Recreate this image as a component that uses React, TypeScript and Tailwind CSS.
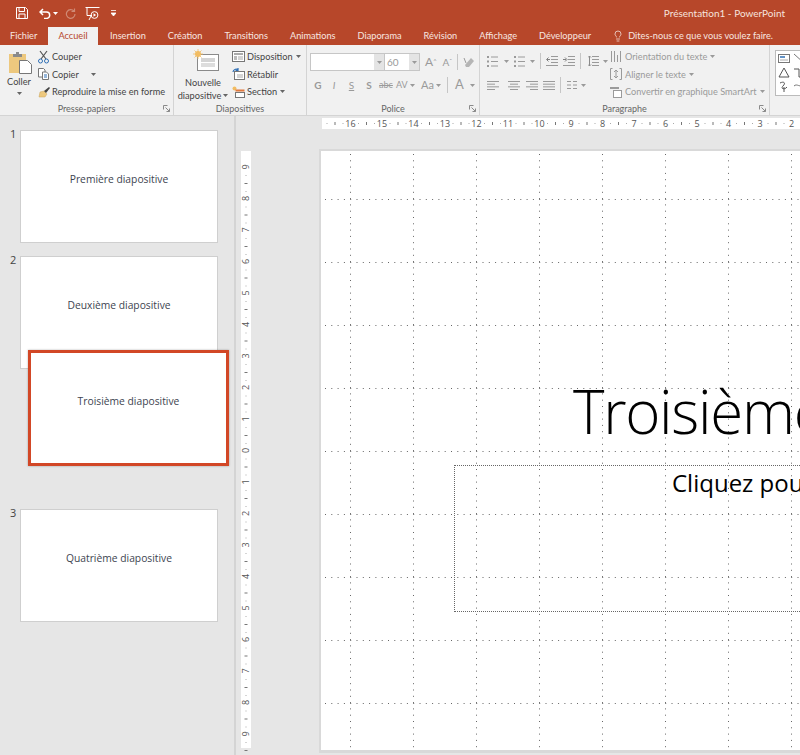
import type { ReactNode } from 'react'
import { Lightbulb } from 'lucide-react'

const tabs = ['Insertion', 'Création', 'Transitions', 'Animations', 'Diaporama', 'Révision', 'Affichage', 'Développeur']

const hNumbers = [16, 15, 14, 13, 12, 11, 10, 9, 8, 7, 6, 5, 4, 3, 2]
const vNumbers = [9, 8, 7, 6, 5, 4, 3, 2, 1, 0, 1, 2, 3, 4, 5, 6, 7, 8, 9]

function Caret({ className = '' }: { className?: string }) {
  return (
    <svg width="5" height="3" viewBox="0 0 5 3" className={`shrink-0 ${className}`}>
      <path d="M0 0h5L2.5 3z" fill="currentColor" />
    </svg>
  )
}

// paragraph alignment glyph, one [x, width] per line
function AlignIcon({ rows }: { rows: number[][] }) {
  return (
    <svg width="12" height="9" viewBox="0 0 12 9" className="block shrink-0">
      {rows.map(([x, w], i) => (
        <rect key={i} x={x} y={i * 2.67} width={w} height="1" fill="#9a9a9a" />
      ))}
    </svg>
  )
}

function ColumnsIcon() {
  return (
    <svg width="10" height="8" viewBox="0 0 10 8" className="block shrink-0">
      <path d="M0 .5h4M6 .5h4M0 4h4M6 4h4M0 7.500h4M6 7.500h4" stroke="#9a9a9a" />
    </svg>
  )
}

function ListIcon() {
  return (
    <svg width="11" height="11" viewBox="0 0 11 11" className="block shrink-0">
      <rect x="0" y="0" width="2" height="2" fill="#9a9a9a" />
      <rect x="0" y="4.500" width="2" height="2" fill="#9a9a9a" />
      <rect x="0" y="9" width="2" height="2" fill="#9a9a9a" />
      <path d="M4 1h7M4 5.500h7M4 10h7" stroke="#9a9a9a" />
    </svg>
  )
}

function IndentIcon({ flip = false }: { flip?: boolean }) {
  return (
    <svg width="12" height="10" viewBox="0 0 12 10" className="block shrink-0">
      <path d="M5 .5h7M5 3.500h7M5 6.500h7M0 9.500h12" stroke="#9a9a9a" />
      <path d={flip ? 'M0 3.500h3M2 1.500l2 2-2 2' : 'M4 3.500H1M2.500 1.500l-2 2 2 2'} stroke="#7f7f7f" fill="none" />
    </svg>
  )
}

function SpacingIcon() {
  return (
    <svg width="11" height="12" viewBox="0 0 11 12" className="block shrink-0">
      <path d="M4 1.500h7M4 4.500h7M4 7.500h7M4 10.500h7" stroke="#9a9a9a" />
      <path d="M1.500 1v10M0 2.500 1.500 1 3 2.500M0 9.500 1.500 11 3 9.500" stroke="#8a8a8a" fill="none" />
    </svg>
  )
}

function SmallIcon({ children, w = 14, h = 14 }: { children: ReactNode; w?: number; h?: number }) {
  return (
    <svg width={w} height={h} viewBox={`0 0 ${w} ${h}`} className="shrink-0">
      {children}
    </svg>
  )
}

function RibbonGroup({ width, label, launcher, children }: { width: string; label: string; launcher?: boolean; children: ReactNode }) {
  return (
    <div className={`relative flex h-full shrink-0 flex-col border-r border-[#d4d4d4] ${width}`}>
      <div className="min-h-0 flex-1">{children}</div>
      <div className="h-[13px] text-center text-[9px] leading-[13px] text-[#666]">{label}</div>
      {launcher && (
        <svg width="7" height="7" viewBox="0 0 7 7" className="absolute bottom-[3px] right-[3px]">
          <path d="M0.5 0.5h4M0.5 0.5v4M2.5 2.5l4 4M6.5 3.500v3h-3" stroke="#8a8a8a" strokeWidth="1" fill="none" />
        </svg>
      )}
    </div>
  )
}

function Thumb({ label }: { label: string }) {
  return (
    <div className="flex h-[113px] w-[198px] items-center justify-center border border-[#cfcfcf] bg-white pb-[14px] font-['Open_Sans',sans-serif] text-[10.3px] text-[#3d4450]">
      {label}
    </div>
  )
}

function HRuler() {
  return (
    <svg width="478" height="11" viewBox="0 0 478 11" className="block bg-white">
      {hNumbers.map((n, i) => {
        const x = 28.5 + i * 31.5
        return (
          <g key={i}>
            <text x={x} y="9" textAnchor="middle" fontSize="9" fill="#555" fontFamily="Open Sans, sans-serif">{n}</text>
            <rect x={x - 16} y="4" width="1" height="3" fill="#777" />
            <rect x={x - 24} y="5" width="1" height="1" fill="#aaa" />
            <rect x={x - 8} y="5" width="1" height="1" fill="#aaa" />
          </g>
        )
      })}
    </svg>
  )
}

function VRuler() {
  return (
    <svg width="10" height="597" viewBox="0 0 10 597" className="mt-[2px] block shrink-0 overflow-visible bg-white">
      {vNumbers.map((n, i) => {
        const y = 16 + i * 31.5
        return (
          <g key={i}>
            <text x="0" y="0" textAnchor="middle" fontSize="9" fill="#555" fontFamily="Open Sans, sans-serif" transform={`translate(8 ${y}) rotate(-90)`}>{n}</text>
            <rect x="3.5" y={y + 16} width="3" height="1" fill="#777" />
            <rect x="4.5" y={y + 8} width="1" height="1" fill="#aaa" />
            <rect x="4.5" y={y + 24} width="1" height="1" fill="#aaa" />
          </g>
        )
      })}
    </svg>
  )
}

function SlideGrid() {
  const vs = Array.from({ length: 8 }).map((_, i) => 29.5 + i * 63)
  const hs = Array.from({ length: 9 }).map((_, i) => 48.5 + i * 63)
  return (
    <svg width="480" height="600" className="absolute left-0 top-0">
      {vs.map((x) => (
        <line key={x} x1={x} x2={x} y1="3" y2="600" stroke="#666" strokeWidth="1" strokeDasharray="1 5.3" />
      ))}
      {hs.map((y) => (
        <line key={y} x1="4" x2="480" y1={y} y2={y} stroke="#666" strokeWidth="1" strokeDasharray="1 5.3" />
      ))}
    </svg>
  )
}

export default function App() {
  return (
    <div className="flex h-[755px] w-[800px] flex-col overflow-hidden bg-[#e6e6e6] font-['Lato',sans-serif]">
      {/* Title bar */}
      <div className="flex h-[26px] shrink-0 items-center justify-between bg-[#b7472a] pl-[16px] pr-[15px] text-white">
        <div className="flex items-center">
          <svg width="12" height="12" viewBox="0 0 12 12">
            <path d="M.5.5h9l2 2v9H.5z" fill="none" stroke="#fff" />
            <path d="M3 1v3.500h5.500V1M3 11V7h6v4" fill="none" stroke="#fff" />
          </svg>
          <svg width="12" height="11" viewBox="0 0 12 11" className="ml-[11px]">
            <path d="M4 1 1 4l3 3M1 4h6.500a3.200 3.200 0 0 1 0 6.400H5" fill="none" stroke="#fff" strokeWidth="1.500" />
          </svg>
          <Caret className="ml-[2px] text-white" />
          <svg width="11" height="11" viewBox="0 0 11 11" className="ml-[7px]">
            <path d="M9 3.200A4.300 4.300 0 1 0 10 6M9.500 .5v3h-3" fill="none" stroke="#d08a75" strokeWidth="1.200" />
          </svg>
          <svg width="15" height="15" viewBox="0 0 15 15" className="ml-[9px]">
            <path d="M.5 1.500h14M2 1.500v8h5M6 10l-2 4" fill="none" stroke="#fff" />
            <circle cx="9.500" cy="9" r="3.400" fill="none" stroke="#fff" />
            <path d="M8.500 7.200v3.600l2.600-1.800z" fill="#fff" />
          </svg>
          <svg width="5" height="6" viewBox="0 0 5 6" className="ml-[11px]">
            <path d="M0 .5h5M0 3h5L2.500 6z" stroke="#fff" strokeWidth=".8" fill="#fff" />
          </svg>
        </div>
        <span className="whitespace-nowrap text-[10px] text-[#f6e3dd]">Présentation1 - PowerPoint</span>
      </div>

      {/* Tabs */}
      <div className="flex h-[19px] shrink-0 items-end whitespace-nowrap bg-[#b7472a] text-[9.2px] leading-[18px] text-[#f8e6e0]">
        <span className="ml-[10px] h-[18px] w-[26px]">Fichier</span>
        <span className="ml-[12px] h-[18px] w-[50px] bg-[#f1f1f1] text-center text-[#b7472a]">Accueil</span>
        <div className="ml-[12px] flex h-[18px] gap-[22px]">
          {tabs.map((t) => (
            <span key={t}>{t}</span>
          ))}
        </div>
        <span className="ml-[21px] flex h-[18px] items-center gap-[4px]">
          <Lightbulb size={12} strokeWidth={1.3} className="text-white" />
          Dites-nous ce que vous voulez faire.
        </span>
      </div>

      {/* Ribbon */}
      <div className="flex h-[71px] shrink-0 whitespace-nowrap border-b border-[#d4d4d4] bg-[#f1f1f1] text-[9.2px] text-[#444]">
        <RibbonGroup width="w-[174px]" label="Presse-papiers" launcher>
          <div className="flex h-full">
            <div className="flex w-[38px] flex-col items-center pt-[7px]">
              <svg width="23" height="22" viewBox="0 0 23 22" className="ml-[3px] shrink-0">
                <path d="M0 2h17v19H0z" fill="#edc87e" />
                <path d="M4 2h3V0h3v2h3v3H4z" fill="#8a8a8a" />
                <path d="M10.500 8.500h8l4 4v9h-12z" fill="#fff" stroke="#777" />
              </svg>
              <span className="mt-[1px] leading-[13px]">Coller</span>
              <Caret className="mt-[4px] text-[#666]" />
            </div>
            <div className="flex flex-col pt-[3px] leading-[17.5px]">
              <div className="flex items-center gap-[3px]">
                <SmallIcon w={11} h={14}>
                  <path d="M2 1l6 8M9 1L3 9" stroke="#555" strokeWidth="1.200" />
                  <circle cx="2.500" cy="11" r="2" fill="none" stroke="#2f6fb5" />
                  <circle cx="8.500" cy="11" r="2" fill="none" stroke="#2f6fb5" />
                </SmallIcon>
                Couper
              </div>
              <div className="flex items-center gap-[3px]">
                <SmallIcon w={11} h={12}>
                  <path d="M.5.5h5l1.500 1.500v7h-6.500z" fill="#fff" stroke="#777" />
                  <path d="M4.500 4h4l2 2v5.500h-6z" fill="#fff" stroke="#777" />
                  <path d="M6 7h3M6 9h3" stroke="#2f6fb5" />
                </SmallIcon>
                Copier
                <Caret className="ml-[9px] text-[#666]" />
              </div>
              <div className="flex items-center gap-[1px]">
                <SmallIcon w={13} h={12}>
                  <path d="M1 11 2 6l4-1 3 3-2 3z" fill="#edc87e" stroke="#c9a45c" strokeWidth=".5" />
                  <path d="M6 5l5-4 1 1-4 5z" fill="#444" />
                </SmallIcon>
                Reproduire la mise en forme
              </div>
            </div>
          </div>
        </RibbonGroup>

        <RibbonGroup width="w-[133px]" label="Diapositives">
          <div className="flex h-full">
            <div className="flex w-[58px] flex-col items-center pt-[4px] leading-[12.5px]">
              <svg width="26" height="23" viewBox="0 0 26 23" className="ml-[6px] shrink-0">
                <rect x="4.500" y="5.500" width="21" height="16" fill="#fff" stroke="#8a8a8a" />
                <rect x="8" y="9" width="14" height="4" fill="#d4d4d4" />
                <path d="M8 15h14M8 17h14" stroke="#bbb" />
                <circle cx="5" cy="5" r="3" fill="#f2bd63" />
                <path d="M5 0v10M0 5h10M1.500 1.500l7 7M8.500 1.500l-7 7" stroke="#f2bd63" strokeWidth=".8" />
              </svg>
              <span className="mt-[5px]">Nouvelle</span>
              <span className="flex items-center gap-[2px]">diapositive <Caret className="text-[#666]" /></span>
            </div>
            <div className="flex flex-col pt-[3px] leading-[17.5px]">
              <div className="flex items-center gap-[2px]">
                <SmallIcon w={13} h={12}>
                  <rect x=".5" y=".5" width="12" height="10" fill="#fff" stroke="#777" />
                  <rect x="2" y="2" width="9" height="2" fill="#aaa" />
                  <rect x="2" y="5" width="3" height="4" fill="#bbb" />
                  <path d="M6 6h5M6 8h5" stroke="#aaa" />
                </SmallIcon>
                <span className="flex items-center gap-[3px]">Disposition <Caret className="text-[#666]" /></span>
              </div>
              <div className="flex items-center gap-[2px]">
                <SmallIcon w={13} h={12}>
                  <rect x="2.500" y="3.500" width="10" height="8" fill="#fff" stroke="#777" />
                  <path d="M1 4a3 3 0 0 1 5-2M6 0v2.500H3.500" fill="none" stroke="#2f6fb5" strokeWidth="1.200" />
                  <path d="M5 7h6M5 9h6" stroke="#aaa" />
                </SmallIcon>
                Rétablir
              </div>
              <div className="flex items-center gap-[2px]">
                <SmallIcon w={13} h={12}>
                  <circle cx="2.500" cy="2.500" r="2" fill="#f2bd63" />
                  <rect x="3.500" y="3.500" width="9" height="2" fill="#e0793f" />
                  <rect x="3.500" y="6.500" width="9" height="5" fill="#fff" stroke="#777" />
                </SmallIcon>
                <span className="flex items-center gap-[3px]">Section <Caret className="text-[#666]" /></span>
              </div>
            </div>
          </div>
        </RibbonGroup>

        <RibbonGroup width="w-[173px]" label="Police" launcher>
          <div className="flex flex-col pl-[3px] pt-[8px] text-[#9a9a9a]">
            <div className="flex h-[18px] items-center">
              <div className="flex h-[18px] w-[75px] justify-end border border-[#c6c6c6] bg-white">
                <div className="flex w-[10px] items-center justify-center bg-[#e4e4e4]"><Caret /></div>
              </div>
              <div className="flex h-[18px] w-[35px] items-center justify-between border border-l-0 border-[#c6c6c6] bg-white pl-[2px] text-[10px]">
                60
                <div className="flex h-full w-[10px] items-center justify-center bg-[#e4e4e4]"><Caret /></div>
              </div>
              <span className="ml-[5px] text-[12px]">A<sup className="text-[6px]">^</sup></span>
              <span className="ml-[6px] text-[10px]">A<sup className="text-[6px]">ˇ</sup></span>
              <span className="ml-[5px] h-[16px] w-px bg-[#c6c6c6]" />
              <svg width="12" height="12" viewBox="0 0 12 12" className="ml-[5px]">
                <path d="M2 9l6-7 3 3-5 6H3z" fill="#b5b5b5" />
                <path d="M1 2l2 5" stroke="#9a9a9a" />
              </svg>
            </div>
            <div className="mt-[5px] flex h-[18px] items-center text-[10px]">
              <span className="w-[16px] text-center font-bold">G</span>
              <span className="w-[16px] text-center italic">I</span>
              <span className="w-[19px] text-center underline">S</span>
              <span className="w-[16px] text-center font-bold">S</span>
              <span className="w-[18px] text-center text-[9px] line-through">abc</span>
              <span className="flex w-[26px] items-center gap-[2px] pl-[1px] text-[9px]">AV <Caret /></span>
              <span className="flex w-[26px] items-center gap-[2px] text-[11px]">Aa <Caret /></span>
              <span className="h-[16px] w-px bg-[#c6c6c6]" />
              <span className="ml-[7px] flex items-center gap-[6px] text-[13px]">A <Caret /></span>
            </div>
          </div>
        </RibbonGroup>

        <RibbonGroup width="w-[290px]" label="Paragraphe" launcher>
          <div className="flex h-full text-[#9a9a9a]">
            <div className="flex w-[130px] flex-col pl-[7px] pt-[9px]">
              <div className="flex h-[14px] items-center">
                <ListIcon />
                <Caret className="ml-[6px]" />
                <span className="ml-[5px]"><ListIcon /></span>
                <Caret className="ml-[5px]" />
                <span className="ml-[5px] h-[16px] w-px bg-[#c6c6c6]" />
                <span className="ml-[5px]"><IndentIcon /></span>
                <span className="ml-[5px]"><IndentIcon flip /></span>
                <span className="ml-[5px] h-[16px] w-px bg-[#c6c6c6]" />
                <span className="ml-[7px]"><SpacingIcon /></span>
                <Caret className="ml-[4px]" />
              </div>
              <div className="mt-[9px] flex h-[16px] items-center">
                <AlignIcon rows={[[0, 12], [0, 8], [0, 12], [0, 8]]} />
                <span className="ml-[9px]"><AlignIcon rows={[[0, 12], [2, 8], [0, 12], [2, 8]]} /></span>
                <span className="ml-[6px]"><AlignIcon rows={[[0, 12], [4, 8], [0, 12], [4, 8]]} /></span>
                <span className="ml-[5px]"><AlignIcon rows={[[0, 12], [0, 12], [0, 12], [0, 12]]} /></span>
                <span className="ml-[5px] h-[16px] w-px bg-[#c6c6c6]" />
                <span className="ml-[6px]"><ColumnsIcon /></span>
                <Caret className="ml-[4px]" />
              </div>
            </div>
            <div className="flex flex-col pt-[3px] leading-[17.5px]">
              <div className="flex items-center gap-[3px]">
                <SmallIcon w={12} h={13}>
                  <path d="M1.500 1v11M4.500 1v11M7.500 5v7M10.500 1v11" stroke="#9a9a9a" />
                </SmallIcon>
                <span className="flex items-center gap-[3px]">Orientation du texte <Caret /></span>
              </div>
              <div className="flex items-center gap-[3px]">
                <SmallIcon w={12} h={12}>
                  <path d="M2.500.5H.5v11h2M9.500.5h2v11h-2" fill="none" stroke="#9a9a9a" />
                  <path d="M6 2v8M4 4l2-2 2 2M4 8l2 2 2-2" fill="none" stroke="#9a9a9a" />
                </SmallIcon>
                <span className="flex items-center gap-[3px]">Aligner le texte <Caret /></span>
              </div>
              <div className="flex items-center gap-[3px]">
                <SmallIcon w={12} h={12}>
                  <path d="M0 1h9v2H0z" fill="#9a9a9a" />
                  <rect x="3.500" y="4.500" width="8" height="7" fill="#fff" stroke="#9a9a9a" />
                </SmallIcon>
                <span className="flex items-center gap-[3px]">Convertir en graphique SmartArt <Caret /></span>
              </div>
            </div>
          </div>
        </RibbonGroup>

        <div className="pl-[5px] pt-[5px]">
          <div className="h-[46px] w-[40px] border border-[#bbb] bg-white">
            <svg width="38" height="44" viewBox="0 0 38 44">
              <rect x="2.500" y="3.500" width="11" height="8" fill="#fff" stroke="#777" />
              <path d="M4 6h5" stroke="#2f6fb5" strokeWidth="1.500" />
              <path d="M4 9h8" stroke="#aaa" />
              <path d="M18 3l10 9" stroke="#777" />
              <path d="M8 17l-5 9h10z" fill="none" stroke="#555" />
              <path d="M18 18h5v8h6" fill="none" stroke="#555" />
              <path d="M4 32c4-2 6 0 3 3s2 4 4 1M8 36v5" fill="none" stroke="#555" />
              <path d="M18 35c3-3 6 2 10-1" fill="none" stroke="#777" />
            </svg>
          </div>
        </div>
      </div>

      {/* Work area */}
      <div className="relative flex min-h-0 flex-1">
        <div className="flex h-full w-[236px] shrink-0 flex-col gap-[13px] border-r-2 border-[#d4d4d4] pt-[14px]">
          <div className="flex">
            <span className="w-[20px] pl-[10px] font-['Open_Sans',sans-serif] text-[11px] leading-[8px] text-[#444]">1</span>
            <Thumb label="Première diapositive" />
          </div>
          <div className="flex">
            <span className="w-[20px] pl-[10px] font-['Open_Sans',sans-serif] text-[11px] leading-[8px] text-[#444]">2</span>
            <Thumb label="Deuxième diapositive" />
          </div>
          <div className="mt-[127px] flex">
            <span className="w-[20px] pl-[10px] font-['Open_Sans',sans-serif] text-[11px] leading-[8px] text-[#444]">3</span>
            <Thumb label="Quatrième diapositive" />
          </div>
        </div>

        {/* Dragged thumbnail */}
        <div className="absolute left-[28px] top-[234px] flex h-[116px] w-[201px] items-center justify-center border-[3px] border-[#d24726] bg-white pb-[12px] font-['Open_Sans',sans-serif] text-[10.3px] text-[#3d4450] shadow-[0_0_2px_rgba(0,0,0,0.3)]">
          Troisième diapositive
        </div>

        <div className="flex min-w-0 flex-1 flex-col overflow-hidden">
          <div className="pl-[86px] pt-[2px]">
            <HRuler />
          </div>
          <div className="mt-[20px] flex pl-[5px]">
            <VRuler />
            <div className="relative ml-[68px] h-[604px] w-[1067px] shrink-0 border-2 border-b-[3px] border-r-0 border-[#d9d9d9] bg-white font-['Open_Sans',sans-serif]">
              <SlideGrid />
              <div className="absolute left-[252px] top-[224px] whitespace-nowrap text-[60px] font-light leading-[72px] tracking-[-1.300px] text-black">
                Troisième diapositive
              </div>
              <div className="absolute left-[133px] top-[314px] h-[147px] w-[600px] border border-dotted border-[#666]" />
              <div className="absolute left-[351px] top-[315px] whitespace-nowrap text-[24px] leading-[34px] text-black">
                Cliquez pour ajouter un sous-titre
              </div>
            </div>
          </div>
        </div>
      </div>
    </div>
  )
}
